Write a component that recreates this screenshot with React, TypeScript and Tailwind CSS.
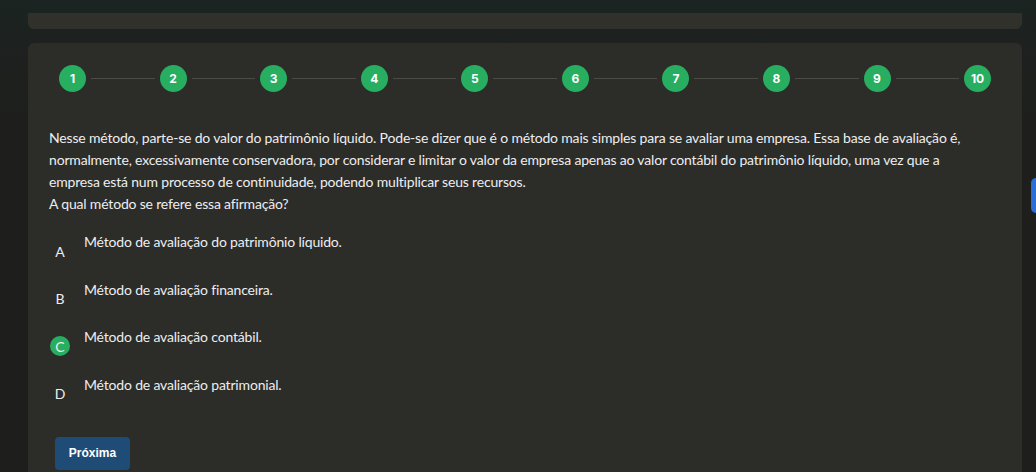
import React from "react";

const steps = [1, 2, 3, 4, 5, 6, 7, 8, 9, 10];
const options = [
  { l: "A", t: "Método de avaliação do patrimônio líquido." },
  { l: "B", t: "Método de avaliação financeira." },
  { l: "C", t: "Método de avaliação contábil.", sel: true },
  { l: "D", t: "Método de avaliação patrimonial." },
];

export default function App() {
  return (
    <div className="relative h-[472px] w-[1036px] overflow-hidden bg-[linear-gradient(to_bottom,#1b2422_0px,#1d211f_40px,#1e1f1c_120px)]" style={{ fontFamily: "Lato, sans-serif" }}>
      <div className="ml-[28px] mr-[14px] pt-[13px]">
        <div className="h-[16px] rounded-b-[6px] bg-[#31312c]" />
        <div className="mt-[14px] h-[440px] rounded-[6px] bg-[#2c2c28] pt-[22px]">
          <div className="flex items-center px-[31px]">
            {steps.map((s, i) => (
              <React.Fragment key={s}>
                <div className="flex h-[27px] w-[27px] shrink-0 items-center justify-center rounded-full bg-[#27ae60] text-[12px] font-bold text-white" style={{ fontFamily: "Inter, sans-serif" }}>
                  {s}
                </div>
                {i < steps.length - 1 && <div className="mx-[5px] h-px flex-1 bg-[#4b4b46]" />}
              </React.Fragment>
            ))}
          </div>
          <div className="mt-[35px] pl-[21px] pr-[31px] text-[14px] leading-[22px] tracking-[-0.18px] text-[#eceef0]">
            <p>
              Nesse método, parte-se do valor do patrimônio líquido. Pode-se dizer que é o método mais simples para se avaliar uma empresa. Essa base de avaliação é, normalmente, excessivamente conservadora, por considerar e limitar o valor da empresa apenas ao valor contábil do patrimônio líquido, uma vez que a empresa está num processo de continuidade, podendo multiplicar seus recursos.
            </p>
            <p>A qual método se refere essa afirmação?</p>
          </div>
          <div className="mt-[17px] flex flex-col gap-[18.5px] pl-[22px]">
            {options.map((o) => (
              <div key={o.l} className="flex items-start">
                <div className={`mt-[9px] flex h-[20px] w-[20px] shrink-0 items-center justify-center rounded-full text-[14px] text-[#eceef0] ${o.sel ? "bg-[#27ae60]" : ""}`}>
                  {o.l}
                </div>
                <div className="ml-[14px] text-[14px] leading-[20px] tracking-[-0.18px] text-[#eceef0]">{o.t}</div>
              </div>
            ))}
          </div>
          <div className="mt-[33px] pl-[27px]">
            <button className="flex h-[33px] w-[75px] items-center justify-center rounded-[4px] bg-[#1f4b77] text-[12px] font-bold text-white" style={{ fontFamily: "'Liberation Sans', Arial, sans-serif" }}>
              Próxima
            </button>
          </div>
        </div>
      </div>
      <div className="absolute left-[1031px] top-[178px] h-[35px] w-[10px] rounded-l-[5px] bg-[#2a6fd8]" />
    </div>
  );
}
